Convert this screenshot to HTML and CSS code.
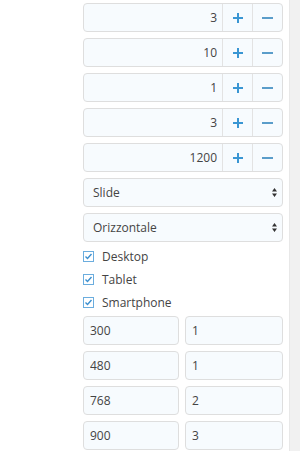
FILE: index.html
```html
<!DOCTYPE html>
<html lang="it">
<head>
  <meta charset="UTF-8">
  <meta name="viewport" content="width=device-width, initial-scale=1.0">
  <title>Impostazioni slider</title>
  <link rel="stylesheet" href="styles.css">
</head>
<body>
  <div class="page">
    <div class="settings">
      <div class="spinner">
        <input type="text" value="3">
        <button class="plus"><svg width="10" height="10" viewBox="0 0 10 10"><path d="M5 0v10M0 5h10"/></svg></button>
        <button class="minus"><svg width="11" height="10" viewBox="0 0 11 10"><path d="M0 5h11"/></svg></button>
      </div>
      <div class="spinner">
        <input type="text" value="10">
        <button class="plus"><svg width="10" height="10" viewBox="0 0 10 10"><path d="M5 0v10M0 5h10"/></svg></button>
        <button class="minus"><svg width="11" height="10" viewBox="0 0 11 10"><path d="M0 5h11"/></svg></button>
      </div>
      <div class="spinner">
        <input type="text" value="1">
        <button class="plus"><svg width="10" height="10" viewBox="0 0 10 10"><path d="M5 0v10M0 5h10"/></svg></button>
        <button class="minus"><svg width="11" height="10" viewBox="0 0 11 10"><path d="M0 5h11"/></svg></button>
      </div>
      <div class="spinner">
        <input type="text" value="3">
        <button class="plus"><svg width="10" height="10" viewBox="0 0 10 10"><path d="M5 0v10M0 5h10"/></svg></button>
        <button class="minus"><svg width="11" height="10" viewBox="0 0 11 10"><path d="M0 5h11"/></svg></button>
      </div>
      <div class="spinner">
        <input type="text" value="1200">
        <button class="plus"><svg width="10" height="10" viewBox="0 0 10 10"><path d="M5 0v10M0 5h10"/></svg></button>
        <button class="minus"><svg width="11" height="10" viewBox="0 0 11 10"><path d="M0 5h11"/></svg></button>
      </div>

      <div class="select-box">
        <select>
          <option>Slide</option>
          <option>Fade</option>
        </select>
        <svg class="arrows" width="5" height="9" viewBox="0 0 5 9"><path d="M2.5 0L5 3.5H0zM2.5 9L0 5.5h5z"/></svg>
      </div>
      <div class="select-box">
        <select>
          <option>Orizzontale</option>
          <option>Verticale</option>
        </select>
        <svg class="arrows" width="5" height="9" viewBox="0 0 5 9"><path d="M2.5 0L5 3.5H0zM2.5 9L0 5.5h5z"/></svg>
      </div>

      <div class="checks">
        <label class="check"><span class="box"><svg width="9" height="9" viewBox="0 0 9 9"><path d="M1.5 4.5l2 2 4-4.5"/></svg></span>Desktop</label>
        <label class="check"><span class="box"><svg width="9" height="9" viewBox="0 0 9 9"><path d="M1.5 4.5l2 2 4-4.5"/></svg></span>Tablet</label>
        <label class="check"><span class="box"><svg width="9" height="9" viewBox="0 0 9 9"><path d="M1.5 4.5l2 2 4-4.5"/></svg></span>Smartphone</label>
      </div>

      <div class="pair">
        <input type="text" value="300">
        <input type="text" value="1">
      </div>
      <div class="pair">
        <input type="text" value="480">
        <input type="text" value="1">
      </div>
      <div class="pair">
        <input type="text" value="768">
        <input type="text" value="2">
      </div>
      <div class="pair">
        <input type="text" value="900">
        <input type="text" value="3">
      </div>
    </div>
    <div class="rail"></div>
  </div>
</body>
</html>
```

FILE: styles.css
```css
body {
  margin: 0;
  font-family: "Open Sans", Arial, sans-serif;
  font-size: 12px;
  color: #444;
  background-color: #fff;
}

.page {
  display: flex;
  height: 451px;
  overflow: hidden;
}

.settings {
  width: 200px;
  padding: 3px 0 0 83px;
}

.rail {
  margin-left: auto;
  width: 10px;
  background-color: #f1f1f1;
  border-left: 1px solid #e8e8e8;
}

input, select {
  font-family: inherit;
  font-size: 12px;
  color: #444;
  box-sizing: border-box;
  outline: none;
}

/* number spinners */
.spinner {
  display: flex;
  box-sizing: border-box;
  height: 29px;
  margin-bottom: 6px;
  border: 1px solid #dedede;
  border-radius: 4px;
  background-color: #f7fbfe;
  overflow: hidden;
}

.spinner input {
  flex: 1;
  min-width: 0;
  border: none;
  background: transparent;
  text-align: right;
  padding: 0 5px 0 0;
}

.spinner button {
  width: 30px;
  border: none;
  border-left: 1px solid #e3e3e3;
  background: transparent;
  padding: 0;
  display: flex;
  align-items: center;
  justify-content: center;
  cursor: pointer;
}

.spinner svg path {
  stroke-width: 2;
  fill: none;
}

.plus svg path {
  stroke: #3a96d3;
}

.minus svg path {
  stroke: #5a9dca;
}

/* selects */
.select-box {
  position: relative;
  margin-bottom: 6px;
}

.select-box select {
  display: block;
  width: 100%;
  height: 29px;
  appearance: none;
  -webkit-appearance: none;
  border: 1px solid #dedede;
  border-radius: 4px;
  background-color: #f7fbfe;
  padding: 0 0 0 9px;
}

.select-box .arrows {
  position: absolute;
  right: 6px;
  top: 10px;
  fill: #333;
  pointer-events: none;
}

/* checkboxes */
.checks {
  margin: -3px 0 2px;
}

.check {
  display: flex;
  align-items: center;
  height: 23px;
  font-size: 12px;
  color: #444;
}

.check .box {
  width: 9px;
  height: 9px;
  border: 1px solid #6badde;
  background-color: #fff;
  margin-right: 8px;
  display: flex;
  align-items: center;
  justify-content: center;
}

.check .box path {
  stroke: #3b8fcf;
  stroke-width: 1.4;
  fill: none;
}

/* breakpoint pairs */
.pair {
  display: flex;
  gap: 6px;
  margin-bottom: 6px;
}

.pair input {
  height: 29px;
  width: 96px;
  border: 1px solid #dedede;
  border-radius: 4px;
  background-color: #f7fbfe;
  padding: 0 6px;
}

.pair input + input {
  flex: 1;
}
```
